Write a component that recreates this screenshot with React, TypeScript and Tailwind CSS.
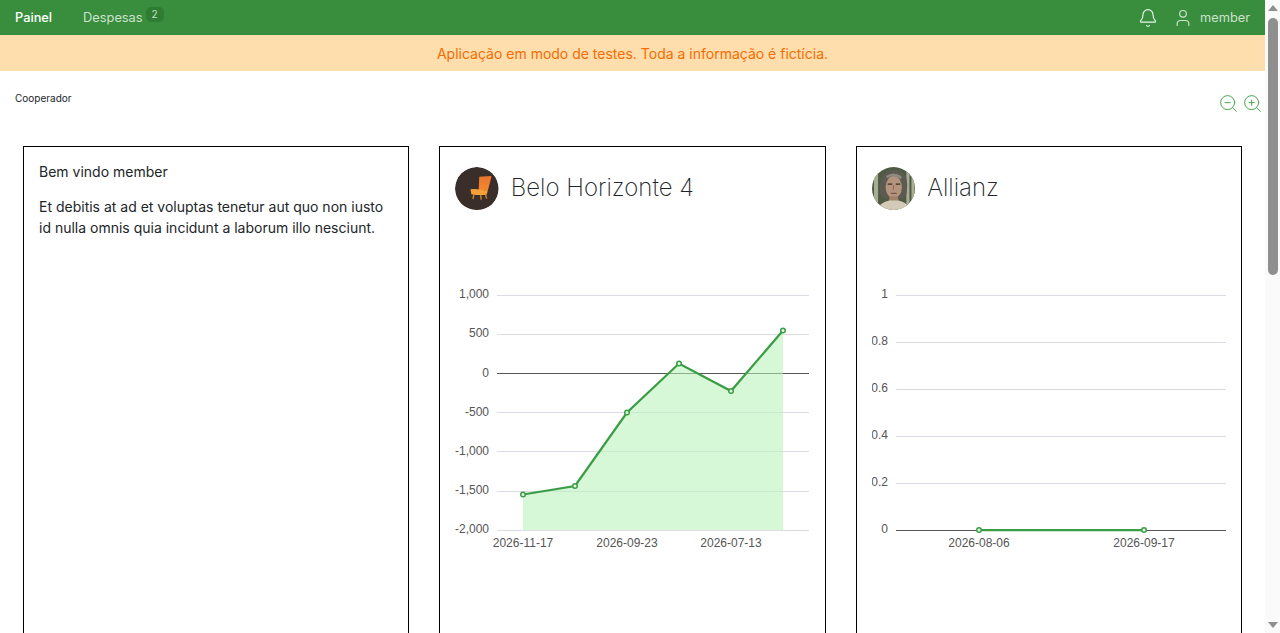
import React from "react";
import { Bell, User, ZoomIn, ZoomOut } from "lucide-react";

const belo = [
  [523, 494.5],
  [575, 486],
  [627, 412.5],
  [679, 363.5],
  [731, 391],
  [783, 330.5],
];

type Tick = { y: number; label: string; zero?: boolean; dy?: number };

const beloTicks: Tick[] = [
  { y: 295, label: "1,000" },
  { y: 334, label: "500" },
  { y: 373, label: "0", zero: true, dy: 4 },
  { y: 412, label: "-500", dy: 4 },
  { y: 451, label: "-1,000", dy: 4 },
  { y: 491, label: "-1,500" },
  { y: 530, label: "-2,000" },
];

const allianzTicks: Tick[] = [
  { y: 295, label: "1" },
  { y: 342, label: "0.8" },
  { y: 389, label: "0.6" },
  { y: 436, label: "0.4" },
  { y: 483, label: "0.2" },
  { y: 530, label: "0", zero: true },
];

const labelFont = { fontFamily: '"Liberation Sans", Arial, sans-serif' };

const ChairAvatar = () => (
  <svg viewBox="0 0 44 44" className="h-[43.5px] w-[43.5px] shrink-0 rounded-full">
    <defs>
      <linearGradient id="chairBack" x1="0" y1="0" x2="0" y2="1">
        <stop offset="0" stopColor="#e8742e" />
        <stop offset="1" stopColor="#f28a30" />
      </linearGradient>
    </defs>
    <circle cx="22" cy="22" r="22" fill="#3a2e2b" />
    <path d="M24.5 9.8 L36.5 9 Q37 9.5 36.6 11 L33 24.5 L24 23 Z" fill="url(#chairBack)" />
    <path d="M15.7 22.5 Q23 21.5 33 24.5 L32 28 Q24 29 16.5 27.5 Z" fill="#f6a03a" />
    <path d="M19 27.5 L18.3 32.5 M31 28 L32 32 M26 28.5 L26.5 33" stroke="#c08428" strokeWidth="1.5" />
  </svg>
);

const PortraitAvatar = () => (
  <svg viewBox="0 0 43 43" className="h-[43.5px] w-[43.5px] shrink-0 rounded-full">
    <defs>
      <filter id="soft">
        <feGaussianBlur stdDeviation="0.6" />
      </filter>
    </defs>
    <rect width="43" height="43" fill="#4f5a44" />
    <g filter="url(#soft)">
      <path d="M2 0h4v43H2zM34 0h3v43h-3zM39 0h3v43h-3z" fill="#a9ad93" />
      <path d="M8 27 C6 9 13 3 22 3 C31 3 37 9 34 27 L31 31 H11 Z" fill="#5c5a51" />
      <ellipse cx="21.5" cy="20" rx="8" ry="11" fill="#b5947f" />
      <path d="M15 11 Q21 7 29 12 L29 9 Q21 4 14 9 Z" fill="#8d8a80" />
      <path d="M15.5 17h4.5M23.5 17h4.5" stroke="#3c2c24" strokeWidth="1.2" />
      <path d="M21.5 18 L21 23" stroke="#8d6b57" strokeWidth="1" />
      <path d="M18.5 26h6" stroke="#6f463c" strokeWidth="1" />
      <path d="M17.5 29 L25.5 29 L26.5 34 L16.5 34 Z" fill="#a08169" />
      <path d="M5 43 C7 36 13 34 17 33 L26 33 C30 34 36 36 38 43 Z" fill="#d3cab8" />
    </g>
  </svg>
);

const Grid = ({ x1, x2, ticks, labelX }: { x1: number; x2: number; ticks: Tick[]; labelX: number }) => (
  <>
    {ticks.map((t) => (
      <g key={t.label}>
        <line x1={x1} x2={x2} y1={t.y + 0.5} y2={t.y + 0.5} stroke={t.zero ? "#555555" : "#dcdce4"} strokeWidth="1" />
        <text x={labelX} y={t.y + (t.dy ?? 3)} textAnchor="end" fontSize="12" fill="#555555" style={labelFont}>
          {t.label}
        </text>
      </g>
    ))}
  </>
);

const Marker = ({ x, y }: { x: number; y: number }) => (
  <circle cx={x} cy={y} r="2.25" fill="#e4f9e4" stroke="#3a9d46" strokeWidth="1.5" />
);

const BeloChart = () => (
  <svg width="355" height="290" viewBox="455 280 355 290" className="block">
    <Grid x1={497} x2={809} ticks={beloTicks} labelX={489} />
    <polygon
      points={`523,530 ${belo.map((p) => p.join(",")).join(" ")} 783,530`}
      fill="#b8f2b8"
      fillOpacity="0.56"
    />
    <polyline points={belo.map((p) => p.join(",")).join(" ")} fill="none" stroke="#3a9d46" strokeWidth="2.25" />
    {belo.map((p) => (
      <Marker key={p[0]} x={p[0]} y={p[1]} />
    ))}
    {[
      [523, "2026-11-17"],
      [627, "2026-09-23"],
      [731, "2026-07-13"],
    ].map(([x, label]) => (
      <text key={label} x={x} y={547} textAnchor="middle" fontSize="12" fill="#555555" style={labelFont}>
        {label}
      </text>
    ))}
  </svg>
);

const AllianzChart = () => (
  <svg width="355" height="290" viewBox="872 280 355 290" className="block">
    <Grid x1={896} x2={1226} ticks={allianzTicks} labelX={888} />
    <line x1={979} x2={1144} y1={530} y2={530} stroke="#3a9d46" strokeWidth="2.25" />
    <Marker x={979} y={530} />
    <Marker x={1144} y={530} />
    {[
      [979, "2026-08-06"],
      [1144, "2026-09-17"],
    ].map(([x, label]) => (
      <text key={label} x={x} y={547} textAnchor="middle" fontSize="12" fill="#555555" style={labelFont}>
        {label}
      </text>
    ))}
  </svg>
);

const ProjectCard = ({ title, avatar, children }: { title: string; avatar: React.ReactNode; children: React.ReactNode }) => (
  <div className="h-[1330px] border border-black pt-5 px-[15px]">
    <div className="flex h-[43px] items-center gap-3">
      {avatar}
      <h2 className="pb-[1px] text-2xl font-extralight text-[#212529]">{title}</h2>
    </div>
    <div className="mt-[70px]">{children}</div>
  </div>
);

// drawn rail, the headless browser hides the native one
const ScrollRail = () => (
  <aside className="flex w-[15px] shrink-0 flex-col items-center bg-[#fafafa]">
    <div className="mt-[5px] h-0 w-0 border-x-[5px] border-b-[6px] border-x-transparent border-b-[#8f8f8f]" />
    <div className="mt-[7px] h-[257px] w-[10px] rounded-[5px] bg-[#8f8f8f]" />
    <div className="mb-[5px] mt-auto h-0 w-0 border-x-[5px] border-t-[6px] border-x-transparent border-t-[#8f8f8f]" />
  </aside>
);

export default function App() {
  return (
    <div className="flex h-screen overflow-hidden bg-white text-[#212529] font-['Inter',sans-serif]">
      <main className="min-w-0 flex-1">
        <nav className="flex h-[35px] items-center justify-between bg-[#388e3c] px-[15px] text-[12.8px] text-white">
          <div className="flex items-center">
            <a className="font-medium text-white">Painel</a>
            <a className="ml-[31px] text-white/75">Despesas</a>
            <span className="mb-[6px] ml-[3px] rounded-[5px] bg-[#2e7d32] px-[6px] text-[10px] leading-[15px] text-white/75">2</span>
          </div>
          <div className="flex items-center text-white/75">
            <Bell className="mr-[15px] text-white/90" size={20} strokeWidth={1.4} />
            <User className="mr-[7px]" size={20} strokeWidth={1.4} />
            <span>member</span>
          </div>
        </nav>

        <div className="flex h-9 items-center justify-center bg-[#ffdead] pt-[1px] text-sm text-[#f56c00]">
          Aplicação em modo de testes. Toda a informação é fictícia.
        </div>

        <div className="flex h-[75px] items-start justify-between pl-[15px] pr-[2.5px] pt-[20px]">
          <span className="text-[10px] leading-[14px]">Cooperador</span>
          <div className="mt-[1.5px] flex gap-[3px] text-[#43a047]">
            <ZoomOut size={21} strokeWidth={1.1} />
            <ZoomIn size={21} strokeWidth={1.1} />
          </div>
        </div>

        <div className="grid grid-cols-3 gap-[30px] px-[23px] pb-8">
          <div className="h-[1330px] border border-black px-[15px] pt-[14px] text-sm leading-[21px]">
            <p className="mb-[14px]">Bem vindo member</p>
            <p>Et debitis at ad et voluptas tenetur aut quo non iusto id nulla omnis quia incidunt a laborum illo nesciunt.</p>
          </div>
          <ProjectCard title="Belo Horizonte 4" avatar={<ChairAvatar />}>
            <BeloChart />
          </ProjectCard>
          <ProjectCard title="Allianz" avatar={<PortraitAvatar />}>
            <AllianzChart />
          </ProjectCard>
        </div>
      </main>
      <ScrollRail />
    </div>
  );
}
